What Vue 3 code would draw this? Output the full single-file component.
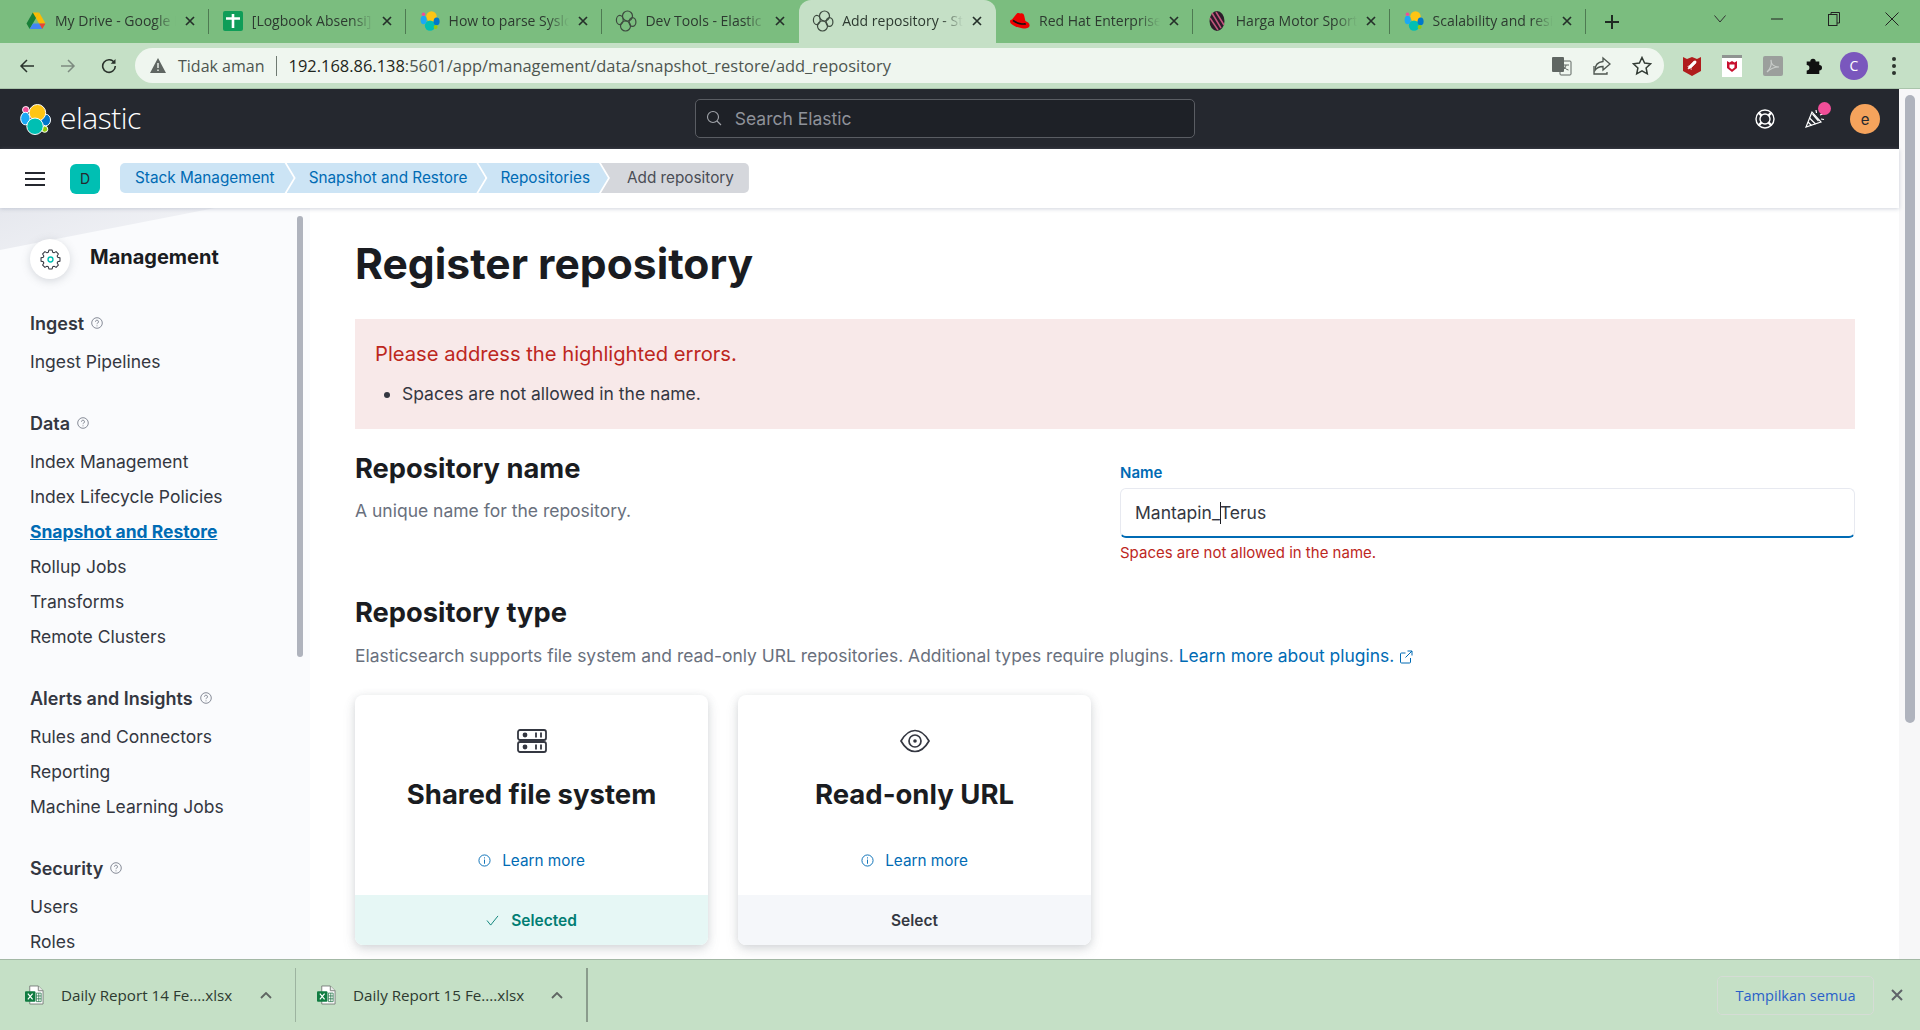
<template>
  <div class="app">
    <!-- browser tabs -->
    <div class="tabstrip">
      <div
        v-for="tab in tabs"
        :key="tab.title"
        class="tab"
        :class="{ active: tab.active, plain: tab.noSep }"
      >
        <span class="fav">
          <svg v-if="tab.icon === 'drive'" viewBox="0 0 20 18" width="20" height="18">
            <path d="M6.800 .5h6.400l-3.200 5.500-3.200-.2z" fill="#fbbc04" />
            <path d="M13.200 .5l6.300 11h-6.400L9.900 6z" fill="#fbbc04" />
            <path d="M6.800 .5 10 6 3.700 17 .5 11.500z" fill="#188038" />
            <path d="M6.900 11.500h6.200L16.300 17H3.700z" fill="#4285f4" />
            <path d="M13.100 11.500h6.400L16.300 17z" fill="#ea4335" />
          </svg>
          <svg v-else-if="tab.icon === 'sheets'" viewBox="0 0 20 20" width="20" height="20">
            <rect x="0" y="0" width="20" height="20" rx="2" fill="#0f9d58" />
            <path d="M3 7.500h14M10 3v14" stroke="#fff" stroke-width="2.600" />
          </svg>
          <svg v-else-if="tab.icon === 'elastic'" viewBox="0 0 20 20" width="20" height="20">
            <circle cx="11.500" cy="5.500" r="5.200" fill="#fec514" />
            <circle cx="10" cy="14.600" r="5.200" fill="#00bfb3" />
            <ellipse cx="3.600" cy="9" rx="3" ry="4.200" fill="#1ba9f5" />
            <ellipse cx="16.600" cy="10.400" rx="3" ry="3.800" fill="#0077cc" />
            <circle cx="3.500" cy="3.200" r="1.800" fill="#f04e98" />
            <circle cx="15.600" cy="16" r="2" fill="#93c90e" />
          </svg>
          <svg v-else-if="tab.icon === 'outline'" viewBox="0 0 22 22" width="22" height="22" fill="none" stroke="#3d4a3f" stroke-width="1.200">
            <circle cx="12.500" cy="6" r="5" />
            <circle cx="10.500" cy="16" r="5" />
            <ellipse cx="4.800" cy="10" rx="3.400" ry="4.600" />
            <ellipse cx="17.500" cy="12" rx="3.400" ry="4.400" />
          </svg>
          <svg v-else-if="tab.icon === 'redhat'" viewBox="0 0 22 22" width="22" height="22">
            <path d="M7 4.500c1.200-2 3-1.600 4.600-1 1.600-.6 3 .2 3.600 2.200l1.200 5.300c1.800.8 4.200 2 4.200 4.200 0 2.400-3 3.400-5.800 3.200C10.600 18.500 1 15 1 11.400c0-1 .9-1.800 2-1.800z" fill="#e00" />
            <path d="M4.500 9.800c3 2.500 8 3.700 12 3.300l.5 1.600c-5 .6-10-.8-13.500-3.800z" fill="#111" />
          </svg>
          <svg v-else-if="tab.icon === 'harga'" viewBox="0 0 20 20" width="20" height="20">
            <ellipse cx="10" cy="10" rx="7.500" ry="10" fill="#2b1c2a" />
            <path d="M5 2l9 15M3 7l8 12M9 1l8 13" stroke="#c2557c" stroke-width="1.500" />
          </svg>
        </span>
        <span class="tab-title">{{ tab.title }}</span>
        <span class="tab-x">
          <svg viewBox="0 0 10 10" width="10" height="10"><path d="M1 1l8 8M9 1l-8 8" stroke="#25302a" stroke-width="1.700" /></svg>
        </span>
      </div>
      <span class="newtab">
        <svg viewBox="0 0 16 16" width="16" height="16"><path d="M8 1v14M1 8h14" stroke="#1f2a22" stroke-width="2" /></svg>
      </span>
      <div class="winctl">
        <svg viewBox="0 0 12 8" width="12" height="8"><path d="M.5 .5 6 7l5.500-6.500" fill="none" stroke="#333" /></svg>
        <svg viewBox="0 0 12 2" width="12" height="2"><path d="M0 1h12" stroke="#222" /></svg>
        <svg viewBox="0 0 12 14" width="12" height="14" fill="none" stroke="#222"><rect x=".5" y="2.500" width="8.500" height="11" /><path d="M3 2.500V.5h8.500v10.500H9" /></svg>
        <svg viewBox="0 0 14 14" width="14" height="14"><path d="M.5 .5l13 13M13.500 .5l-13 13" stroke="#222" /></svg>
      </div>
    </div>

    <!-- address bar -->
    <div class="toolbar">
      <div class="nav-btns">
        <svg viewBox="0 0 16 16" width="16" height="16" fill="none" stroke="#2a332c" stroke-width="1.500"><path d="M15 8H2M8 2 2 8l6 6" /></svg>
        <svg viewBox="0 0 16 16" width="16" height="16" fill="none" stroke="#7d8b80" stroke-width="1.500"><path d="M1 8h13M8 2l6 6-6 6" /></svg>
        <svg viewBox="0 0 16 16" width="16" height="16" fill="none" stroke="#2a332c" stroke-width="1.600"><path d="M13.500 5A6.300 6.300 0 1 0 14.300 8" /><path d="M14.500 1v4.800H9.700z" fill="#2a332c" stroke="none" /></svg>
      </div>
      <div class="omnibox">
        <svg class="warn" viewBox="0 0 16 15" width="16" height="15"><path d="M8 0l8 15H0z" fill="#5f6662" /><path d="M8 5v5M8 11.500v1.500" stroke="#eff6ef" stroke-width="1.400" /></svg>
        <span class="insecure">Tidak aman</span>
        <span class="omni-sep"></span>
        <span class="url"><b>192.168.86.138</b>:5601/app/management/data/snapshot_restore/add_repository</span>
        <div class="omni-icons">
          <svg viewBox="0 0 20 20" width="20" height="20"><rect x="8" y="5" width="11" height="14" rx="1" fill="#eff6ef" stroke="#5f6662" /><rect x="0" y="1" width="12" height="15" rx="1" fill="#5f6662" /><path d="M11 9h6M14 9c-.4 2.500-1.600 4-3 5M12 10.500c.8 1.700 2.200 3 4.500 3.500" fill="none" stroke="#5f6662" /></svg>
          <svg viewBox="0 0 20 20" width="20" height="20" fill="none" stroke="#4d554f" stroke-width="1.300"><path d="M11 2l7 6-7 6v-3.500c-4 0-6.500 1.500-8 4 0-5 3-8.500 8-9z" /><path d="M2 10v8h13v-2" /></svg>
          <svg viewBox="0 0 20 20" width="20" height="20" fill="none" stroke="#333c35" stroke-width="1.500"><path d="M10 1.500l2.600 5.600 6 .7-4.500 4.100 1.200 6-5.300-3-5.300 3 1.200-6L1.400 7.800l6-.7z" /></svg>
        </div>
      </div>
      <div class="ext-icons">
        <svg viewBox="0 0 18 20" width="18" height="20"><path d="M0 1l4 2 5-2 5 2 4-2v14l-9 5-9-5z" fill="#b01c1c" /><path d="M5 13l1-3 5-5 2 0 0 2-5 5zM6 10l-1.500.5M8.500 12.500 8 14" fill="#fff" stroke="#fff" stroke-width=".6" /></svg>
        <svg viewBox="0 0 20 22" width="20" height="22"><rect width="20" height="22" fill="#fff" /><rect width="20" height="3" fill="#8f9491" /><path d="M5 6l2.500 1.500L10 6l2.500 1.500L15 6v7l-5 4-5-4z" fill="#c8102e" /><path d="M7.500 9.500h5v3l-2.500 2-2.500-2z" fill="#fff" /></svg>
        <svg viewBox="0 0 20 20" width="20" height="20"><rect width="20" height="20" rx="2" fill="#9b9f9c" /><path d="M4 16c3-3 5-8 4-12 0 4 3 7 8 7-4 0-9 2-12 5z" fill="none" stroke="#c9cdca" stroke-width="1.200" /></svg>
        <svg viewBox="0 0 20 20" width="18" height="18"><path d="M3 5h4a3 3 0 1 1 6 0h4v4a3 3 0 1 1 0 6v4H3v-4a3 3 0 1 0 0-6z" fill="#111" /></svg>
        <span class="profile">C</span>
        <svg viewBox="0 0 4 18" width="4" height="18" fill="#2c332e"><circle cx="2" cy="2" r="2" /><circle cx="2" cy="9" r="2" /><circle cx="2" cy="16" r="2" /></svg>
      </div>
    </div>

    <div class="viewport">
      <div class="page">
        <!-- kibana header -->
        <header class="kbn-top">
          <div class="brand">
            <svg viewBox="0 0 32 32" width="31" height="31">
              <circle cx="6" cy="6" r="3.400" fill="#f04e98" stroke="#fff" stroke-width="1" />
              <ellipse cx="5.500" cy="15" rx="4.800" ry="6.500" fill="#1ba9f5" stroke="#fff" stroke-width="1" />
              <ellipse cx="26.500" cy="16.500" rx="5" ry="6" fill="#0077cc" stroke="#fff" stroke-width="1" />
              <circle cx="25.500" cy="26" r="3.200" fill="#93c90e" stroke="#fff" stroke-width="1" />
              <circle cx="18" cy="9" r="8.500" fill="#fec514" stroke="#fff" stroke-width="1" />
              <circle cx="15.500" cy="23" r="8.500" fill="#00bfb3" stroke="#fff" stroke-width="1" />
            </svg>
            <span>elastic</span>
          </div>
          <div class="searchbox">
            <svg viewBox="0 0 16 16" width="16" height="16" fill="none" stroke="#a2a5ab" stroke-width="1.100"><circle cx="7" cy="7" r="5.500" /><path d="M11 11l4 4" /></svg>
            <span>Search Elastic</span>
          </div>
          <div class="top-icons">
            <svg viewBox="0 0 20 20" width="20" height="20" fill="none" stroke="#fff" stroke-width="1.400"><circle cx="10" cy="10" r="9" /><circle cx="10" cy="10" r="5" /><path d="M3.600 3.600l3 3M16.400 3.600l-3 3M3.600 16.400l3-3M16.400 16.400l-3-3" stroke-width="2.400" /></svg>
            <span class="party">
              <svg viewBox="0 0 20 20" width="20" height="20" fill="none" stroke="#fff" stroke-width="1.200"><path d="M7 3 1 18l15-5z" /><path d="M4.500 9l6 6M3 13l3.500 3.500M7.500 5l6 7" /><path d="M11 1l.5 3M15 6l4-1.500M16 10l3 .5" /></svg>
              <i class="pink-dot"></i>
            </span>
            <span class="avatar">e</span>
          </div>
        </header>

        <!-- breadcrumbs -->
        <div class="crumbbar">
          <svg class="burger" viewBox="0 0 20 16" width="20" height="16"><path d="M0 2h20M0 8h20M0 14h20" stroke="#25282f" stroke-width="2" /></svg>
          <span class="space-badge">D</span>
          <nav class="crumbs">
            <span v-for="(c, i) in crumbs" :key="c" class="crumb" :class="{ first: i === 0, last: i === crumbs.length - 1 }">{{ c }}</span>
          </nav>
        </div>

        <div class="body-row">
          <!-- management side nav -->
          <aside class="side">
            <div class="side-deco"></div>
            <div class="side-head">
              <span class="gear">
                <svg viewBox="0 0 24 24" width="21" height="21" fill="none" stroke="#343741" stroke-width="1.200">
                  <path :d="gearPath" stroke-linejoin="round" />
                  <circle cx="12" cy="12" r="2.800" stroke="#00bfb3" stroke-width="1.600" />
                </svg>
              </span>
              <span class="side-title">Management</span>
            </div>
            <div v-for="g in navGroups" :key="g.title" class="nav-group">
              <div class="nav-title">
                {{ g.title }}
                <svg viewBox="0 0 12 12" width="12" height="12" fill="none" stroke="#69707d" stroke-width=".8"><circle cx="6" cy="6" r="5.300" /><path d="M4.500 4.700a1.500 1.500 0 1 1 2.200 1.300C6.200 6.300 6 6.600 6 7.200M6 8.400v.9" /></svg>
              </div>
              <a v-for="item in g.items" :key="item" class="nav-item" :class="{ current: item === 'Snapshot and Restore' }">{{ item }}</a>
            </div>
            <div class="side-scroll"></div>
          </aside>

          <!-- register form -->
          <main class="content">
            <h1>Register repository</h1>
            <div class="callout">
              <div class="callout-title">Please address the highlighted errors.</div>
              <ul><li>Spaces are not allowed in the name.</li></ul>
            </div>

            <section class="name-row">
              <div class="name-desc">
                <h2>Repository name</h2>
                <p class="muted">A unique name for the repository.</p>
              </div>
              <div class="name-field">
                <label>Name</label>
                <div class="input"><span>Mantapin_</span><i class="caret"></i><span>Terus</span></div>
                <div class="field-error">Spaces are not allowed in the name.</div>
              </div>
            </section>

            <h2 class="type-title">Repository type</h2>
            <p class="muted type-desc">
              Elasticsearch supports file system and read-only URL repositories. Additional types require plugins.
              <a class="link">Learn more about plugins.</a>
              <svg viewBox="0 0 14 14" width="14" height="14" fill="none" stroke="#006bb4" stroke-width="1"><path d="M11.500 8v4a1 1 0 0 1-1 1h-8a1 1 0 0 1-1-1V4a1 1 0 0 1 1-1h4M8.500 1h4.500v4.500M13 1 6.500 7.500" /></svg>
            </p>

            <div class="cards">
              <div v-for="card in cards" :key="card.title" class="card" :class="{ selected: card.selected }">
                <div class="card-main">
                  <svg v-if="card.icon === 'server'" viewBox="0 0 30 24" width="30" height="24" fill="none" stroke="#343741" stroke-width="1.800">
                    <rect x="1" y="1" width="28" height="10" rx="2" />
                    <rect x="1" y="13" width="28" height="10" rx="2" />
                    <circle cx="8" cy="6" r="2.400" fill="#343741" stroke="none" />
                    <circle cx="8" cy="18" r="2.400" fill="#343741" stroke="none" />
                    <path d="M19 3.500v5M24 3.500v5M19 15.500v5M24 15.500v5" />
                  </svg>
                  <svg v-else viewBox="0 0 30 24" width="30" height="24" fill="none" stroke="#343741" stroke-width="1.700">
                    <path d="M1 12C5 5 10 1.500 15 1.500S25 5 29 12c-4 7-9 10.500-14 10.500S5 19 1 12z" />
                    <circle cx="15" cy="12" r="6" />
                    <circle cx="15" cy="12" r="1.800" fill="#343741" stroke="none" />
                  </svg>
                  <div class="card-title">{{ card.title }}</div>
                  <div class="card-link">
                    <svg viewBox="0 0 14 14" width="13" height="13" fill="none" stroke="#006bb4" stroke-width="1"><circle cx="7" cy="7" r="6" /><path d="M7 6v4.500M7 3.600v1.200" /></svg>
                    <a>Learn more</a>
                  </div>
                </div>
                <div class="card-foot">
                  <svg v-if="card.selected" viewBox="0 0 14 12" width="13" height="11" fill="none" stroke="#017d73" stroke-width="1"><path d="M1 6l4 5 8-10" /></svg>
                  {{ card.selected ? 'Selected' : 'Select' }}
                </div>
              </div>
            </div>
          </main>
        </div>
      </div>
      <div class="page-scroll"><div class="thumb"></div></div>
    </div>

    <!-- downloads shelf -->
    <footer class="shelf">
      <div v-for="d in downloads" :key="d" class="dl">
        <svg viewBox="0 0 20 20" width="19" height="20">
          <path d="M5 .5h9l5 5v14H5z" fill="#fff" stroke="#7a7f7b" />
          <path d="M14 .5v5h5" fill="#e8eae8" stroke="#7a7f7b" />
          <path d="M12 8h5v9h-5zM12 11h5M12 14h5M14.500 8v9" stroke="#217346" stroke-width=".8" fill="none" />
          <rect x="0" y="6" width="11" height="11" rx="1" fill="#107c41" />
          <path d="M3 8.500l5 6M8 8.500l-5 6" stroke="#fff" stroke-width="1.300" />
        </svg>
        <span class="dl-name">{{ d }}</span>
        <svg viewBox="0 0 12 7" width="12" height="7" fill="none" stroke="#5f6662" stroke-width="1.800"><path d="M1 6l5-5 5 5" /></svg>
      </div>
      <span class="dl-end"></span>
      <a class="show-all">Tampilkan semua</a>
      <svg class="shelf-x" viewBox="0 0 12 12" width="12" height="12"><path d="M1 1l10 10M11 1 1 11" stroke="#5f6368" stroke-width="2" /></svg>
    </footer>
  </div>
</template>

<script setup>
const tabs = [
  { title: 'My Drive - Google Drive', icon: 'drive' },
  { title: '[Logbook Absensi] 2022', icon: 'sheets' },
  { title: 'How to parse Syslog', icon: 'elastic' },
  { title: 'Dev Tools - Elastic', icon: 'outline', noSep: true },
  { title: 'Add repository - Stack Management', icon: 'outline', active: true, noSep: true },
  { title: 'Red Hat Enterprise Linux', icon: 'redhat' },
  { title: 'Harga Motor Sport', icon: 'harga' },
  { title: 'Scalability and resilience', icon: 'elastic' }
]

const crumbs = ['Stack Management', 'Snapshot and Restore', 'Repositories', 'Add repository']

const navGroups = [
  { title: 'Ingest', items: ['Ingest Pipelines'] },
  {
    title: 'Data',
    items: ['Index Management', 'Index Lifecycle Policies', 'Snapshot and Restore', 'Rollup Jobs', 'Transforms', 'Remote Clusters']
  },
  { title: 'Alerts and Insights', items: ['Rules and Connectors', 'Reporting', 'Machine Learning Jobs'] },
  { title: 'Security', items: ['Users', 'Roles'] }
]

const cards = [
  { title: 'Shared file system', icon: 'server', selected: true },
  { title: 'Read-only URL', icon: 'eye', selected: false }
]

const downloads = ['Daily Report 14 Fe....xlsx', 'Daily Report 15 Fe....xlsx']

// cog outline with 8 teeth
function buildGear() {
  const pts = []
  for (let i = 0; i < 8; i++) {
    const a = (i * Math.PI) / 4
    for (const [r, off] of [[8.6, -0.3], [11, -0.17], [11, 0.17], [8.6, 0.3]]) {
      pts.push(`${(12 + r * Math.cos(a + off)).toFixed(2)} ${(12 + r * Math.sin(a + off)).toFixed(2)}`)
    }
  }
  return 'M' + pts.join('L') + 'Z'
}
const gearPath = buildGear()
</script>

<style>
html, body { margin: 0; height: 100%; overflow: hidden; background: #fff; }
</style>

<style scoped>
.app {
  height: 100vh;
  display: flex;
  flex-direction: column;
  overflow: hidden;
  font-family: Inter, "Liberation Sans", sans-serif;
  color: #343741;
}

.tabstrip {
  height: 43px;
  flex: none;
  display: flex;
  padding-left: 12px;
  background: #7bbd7f;
  font-family: "Open Sans", "Liberation Sans", sans-serif;
  font-size: 14px;
}
.tab {
  width: 196.800px;
  flex: none;
  box-sizing: border-box;
  display: flex;
  align-items: center;
  padding: 0 14px 2px 13px;
  position: relative;
  color: #2d3a30;
}
.tab::after {
  content: "";
  position: absolute;
  right: 0;
  top: 9px;
  height: 25px;
  width: 1px;
  background: #4e7a52;
}
.tab.plain::after { display: none; }
.tab.active {
  background: #c5e0c6;
  border-radius: 12px 12px 0 0;
}
.fav { width: 22px; height: 22px; flex: none; display: flex; align-items: center; justify-content: center; }
.tab-title {
  margin-left: 8px;
  flex: 1;
  min-width: 0;
  white-space: nowrap;
  overflow: hidden;
  -webkit-mask-image: linear-gradient(to right, #000 82%, transparent 100%);
  mask-image: linear-gradient(to right, #000 82%, transparent 100%);
}
.tab-x { margin-left: 9px; display: flex; }
.newtab { margin-left: 18px; display: flex; align-items: center; }
.winctl {
  margin-left: auto;
  padding-bottom: 6px;
  display: flex;
  align-items: center;
  gap: 45px;
  padding-right: 21px;
}

.toolbar {
  height: 46px;
  flex: none;
  box-sizing: border-box;
  display: flex;
  align-items: flex-start;
  padding-top: 5px;
  background: #c5e0c6;
  border-bottom: 1px solid #a9c4ab;
  font-family: "Open Sans", "Liberation Sans", sans-serif;
}
.nav-btns {
  width: 135px;
  flex: none;
  height: 35px;
  display: flex;
  align-items: center;
  gap: 25px;
  padding-left: 19px;
  box-sizing: border-box;
}
.omnibox {
  width: 1529px;
  height: 35px;
  flex: none;
  box-sizing: border-box;
  display: flex;
  align-items: center;
  padding: 0 12px 0 15px;
  background: #eff6ef;
  border-radius: 18px;
  font-size: 16px;
}
.insecure { margin-left: 12px; color: #4d554f; }
.omni-sep { width: 1px; height: 20px; background: #6f7a72; margin: 0 12px 0 11px; }
.url { color: #4d554f; font-size: 16.450px; }
.url b { font-weight: 400; color: #1f2620; }
.omni-icons { margin-left: auto; display: flex; gap: 20px; align-items: center; }
.ext-icons {
  flex: 1;
  height: 35px;
  display: flex;
  align-items: center;
  gap: 21px;
  padding-left: 19px;
}
.profile {
  width: 28px;
  height: 28px;
  margin: 0 3px 0 -3px;
  border-radius: 50%;
  background: #7a57bd;
  color: #fff;
  font-size: 14px;
  display: flex;
  align-items: center;
  justify-content: center;
}

.viewport { flex: 1; min-height: 0; display: flex; }
.page { flex: 1; min-width: 0; display: flex; flex-direction: column; }
.page-scroll { width: 21px; flex: none; background: #f7f7f8; padding: 6px 5px 0 6px; box-sizing: border-box; }
.thumb { height: 628px; background: #afb3bd; border-radius: 5px; }

.kbn-top {
  height: 60px;
  flex: none;
  background: #25282f;
  display: flex;
  align-items: center;
  position: relative;
  padding: 0 19px 0 20px;
}
.brand { display: flex; align-items: center; gap: 9px; color: #fff; font-family: "Open Sans", sans-serif; font-size: 30px; font-weight: 300; }
.brand span { line-height: 1; margin-top: -2px; letter-spacing: -.5px; }
.searchbox {
  margin-left: 554px;
  margin-top: -2px;
  width: 500px;
  height: 39px;
  box-sizing: border-box;
  border: 1px solid #5a5d63;
  border-radius: 5px;
  background: #1e2127;
  display: flex;
  align-items: center;
  gap: 13px;
  padding-left: 10px;
  color: #8f929a;
  font-size: 17.500px;
}
.top-icons { margin-left: auto; display: flex; align-items: center; gap: 27px; }
.party { position: relative; display: flex; margin: 0 -2.400px 0 3.600px; }
.pink-dot { position: absolute; width: 13px; height: 13px; border-radius: 50%; background: #f04e98; top: -7px; right: -6px; }
.avatar {
  width: 30px;
  height: 30px;
  border-radius: 50%;
  background: #f5a35c;
  color: #25282f;
  font-size: 15px;
  display: flex;
  align-items: center;
  justify-content: center;
}

.crumbbar {
  height: 59px;
  flex: none;
  display: flex;
  align-items: center;
  background: #fff;
  box-shadow: 0 1px 4px rgba(152, 162, 179, .45);
  position: relative;
  z-index: 2;
  padding-left: 25px;
}
.space-badge {
  width: 30px;
  height: 30px;
  margin-left: 25px;
  border-radius: 6px;
  background: #00bfb3;
  color: #25282f;
  font-size: 14px;
  display: flex;
  align-items: center;
  justify-content: center;
}
.crumbs { display: flex; margin-left: 20px; font-size: 15.300px; margin-top: -1px; }
.crumb {
  height: 30px;
  line-height: 30px;
  box-sizing: border-box;
  padding: 0 18px 0 22px;
  margin-right: -7px;
  background: #cce4f5;
  color: #006bb4;
  white-space: nowrap;
  clip-path: polygon(0 0, calc(100% - 9px) 0, 100% 50%, calc(100% - 9px) 100%, 0 100%, 9px 50%);
}
.crumb.first { padding: 0 19px 0 15px; clip-path: polygon(0 0, calc(100% - 9px) 0, 100% 50%, calc(100% - 9px) 100%, 0 100%); border-radius: 5px 0 0 5px; }
.crumb.last {
  background: #d5d7dc;
  color: #4a4d55;
  padding: 0 15px 0 26px;
  margin-right: 0;
  border-radius: 0 5px 5px 0;
  clip-path: polygon(0 0, 100% 0, 100% 100%, 0 100%, 9px 50%);
}

.body-row { flex: 1; min-height: 0; display: flex; }
.side {
  width: 310px;
  flex: none;
  box-sizing: border-box;
  padding: 31px 0 0 30px;
  background: #fafbfd;
  position: relative;
  overflow: hidden;
}
.side-deco {
  position: absolute;
  left: 0;
  top: 0;
  width: 215px;
  height: 42px;
  background: linear-gradient(160deg, #e6e8ee, #f4f5f8);
  clip-path: polygon(0 0, 100% 0, 0 100%);
}
.side-head { display: flex; align-items: center; gap: 20px; margin-bottom: 32px; position: relative; }
.gear {
  width: 40px;
  height: 40px;
  border-radius: 50%;
  background: #fff;
  box-shadow: 0 2px 8px rgba(105, 112, 125, .25);
  display: flex;
  align-items: center;
  justify-content: center;
}
.side-title { font-size: 20px; font-weight: 700; color: #1a1c21; margin-top: -4px; }
.nav-group { margin-bottom: 32px; }
.nav-title {
  height: 24px;
  display: flex;
  align-items: center;
  gap: 7px;
  font-size: 18px;
  font-weight: 600;
  color: #343741;
  margin-bottom: 9px;
}
.nav-item {
  display: block;
  height: 35px;
  line-height: 35px;
  font-size: 17.500px;
  color: #343741;
  white-space: nowrap;
}
.nav-item.current { color: #006bb4; font-weight: 700; text-decoration: underline; }
.side-scroll {
  position: absolute;
  left: 297px;
  top: 8px;
  width: 6px;
  height: 441px;
  border-radius: 3px;
  background: #afb3bd;
}

.content {
  flex: 1;
  min-width: 0;
  padding: 30px 44px 0 45px;
  box-sizing: border-box;
  overflow: hidden;
}
h1 { margin: 0; font-size: 42.600px; line-height: 52px; font-weight: 700; color: #1a1c21; }
.callout {
  margin-top: 29px;
  height: 110px;
  box-sizing: border-box;
  background: #f8e9e9;
  padding: 22px 20px;
  color: #343741;
}
.callout-title { font-size: 20.200px; line-height: 26px; color: #bd271e; }
.callout ul { margin: 14px 0 0; padding-left: 27px; font-size: 17.500px; line-height: 26px; }

.name-row { display: flex; margin-top: 24px; gap: 30px; }
.name-desc { width: 735px; flex: none; }
h2 { margin: 0; font-size: 27.300px; line-height: 32px; font-weight: 700; color: #1a1c21; }
.muted { margin: 0; font-size: 17.500px; line-height: 26px; color: #69707d; }
.name-desc .muted { margin-top: 13px; }
.name-field { flex: 1; min-width: 0; padding-top: 11px; }
.name-field label { display: block; font-size: 15px; line-height: 18px; font-weight: 600; color: #006bb4; margin-bottom: 6px; }
.input {
  height: 50px;
  box-sizing: border-box;
  display: flex;
  align-items: center;
  padding: 0 14px;
  background: #fff;
  border: 1px solid #e7e9f0;
  border-bottom: 2px solid #006bb4;
  border-radius: 6px;
  font-size: 17.500px;
  color: #343741;
}
.caret { width: 1px; height: 22px; background: #1a1c21; margin-right: -1px; }
.field-error { margin-top: 6px; font-size: 15px; line-height: 18px; color: #bd271e; }

.type-title { margin-top: 35px; }
.type-desc { margin-top: 14px; font-size: 17.450px; }
.link { color: #006bb4; }
.type-desc svg { margin-left: 5px; vertical-align: -2px; }

.cards { display: flex; gap: 30px; margin-top: 26px; }
.card {
  width: 353px;
  height: 250px;
  display: flex;
  flex-direction: column;
  border-radius: 8px;
  overflow: hidden;
  background: #fff;
  box-shadow: 0 2px 8px rgba(105, 112, 125, .22), 0 6px 14px rgba(105, 112, 125, .12);
}
.card-main {
  flex: 1;
  display: flex;
  flex-direction: column;
  align-items: center;
  padding-top: 34px;
}
.card-title { margin-top: 24px; font-size: 27.500px; line-height: 34px; font-weight: 700; color: #1a1c21; }
.card-link { margin-top: 40px; display: flex; align-items: center; gap: 11px; font-size: 15.300px; color: #006bb4; }
.card-foot {
  height: 50px;
  flex: none;
  display: flex;
  align-items: center;
  justify-content: center;
  gap: 12px;
  font-size: 15.500px;
  font-weight: 600;
  background: #f5f7fa;
  color: #343741;
}
.card.selected .card-foot { background: #e6f7f5; color: #017d73; }

.shelf {
  height: 71px;
  flex: none;
  box-sizing: border-box;
  display: flex;
  align-items: center;
  position: relative;
  z-index: 3;
  background: #c5e0c6;
  border-top: 1px solid #a3b8a5;
  font-family: "Open Sans", "Liberation Sans", sans-serif;
  font-size: 15.200px;
  color: #2d3a30;
}
.dl {
  width: 296px;
  height: 54px;
  box-sizing: border-box;
  display: flex;
  align-items: center;
  padding: 0 23px 0 25px;
  border-right: 1px solid #9db4a0;
}
.dl + .dl { width: 290px; padding-left: 21px; border-right: 0; }
.dl-name { flex: 1; margin-left: 17px; white-space: nowrap; }
.dl-end { width: 2px; height: 54px; background: #8a9c8c; }
.show-all {
  margin-left: auto;
  margin-right: 17px;
  width: 157px;
  height: 39px;
  line-height: 37px;
  box-sizing: border-box;
  text-align: center;
  border: 1px solid #d5dcd5;
  border-radius: 5px;
  font-size: 14.600px;
  color: #2a5fc9;
}
.shelf-x { margin-right: 17px; }
</style>
